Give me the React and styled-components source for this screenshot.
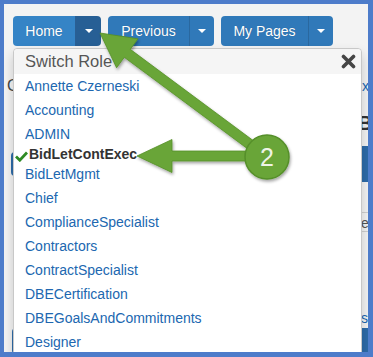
import React from "react";
import styled, { createGlobalStyle } from "styled-components";

const Global = createGlobalStyle`
  html, body { margin: 0; padding: 0; background: #fff; }
  body { font-family: "Liberation Sans", Arial, sans-serif; }
`;

const Frame = styled.div`
  position: relative;
  width: 373px;
  height: 357px;
  box-sizing: border-box;
  border: 4px solid #4d7cca;
  border-right-width: 5px;
  border-bottom-width: 5px;
  background: #f3f3f3;
  overflow: hidden;
  font-family: "Liberation Sans", Arial, sans-serif;
`;

const Toolbar = styled.div`
  display: flex;
  gap: 7px;
  padding: 12px 0 0 9px;
  height: 42px;
  box-sizing: border-box;
`;

const BtnGroup = styled.div`
  display: flex;
  height: 30px;
`;

const MainBtn = styled.button`
  width: ${(p) => p.$w}px;
  height: 30px;
  padding: 0;
  border: none;
  border-radius: 4px 0 0 4px;
  background: ${(p) => (p.$active ? "#3584c6" : "#3079b9")};
  color: #fff;
  font-family: "Liberation Sans", Arial, sans-serif;
  font-size: 14px;
  text-align: center;
  text-shadow: 0 0 1px rgba(0, 0, 0, 0.25);
`;

const CaretBtn = styled.button`
  width: ${(p) => p.$w}px;
  height: 30px;
  padding: 0;
  border: none;
  border-left: 1px solid ${(p) => (p.$active ? "#2a5f94" : "#2a689f")};
  border-radius: 0 4px 4px 0;
  background: ${(p) => (p.$active ? "#275f95" : "#3079b9")};
  display: flex;
  align-items: center;
  justify-content: center;
`;

const Caret = styled.span`
  width: 0;
  height: 0;
  border-left: 4px solid transparent;
  border-right: 4px solid transparent;
  border-top: 4px solid #fff;
`;

const Content = styled.div`
  display: flex;
  flex-direction: column;
`;

const BgRow = styled.div`
  display: grid;
  grid-template-columns: 357px 40px;
  height: ${(p) => p.$h}px;
  margin-top: ${(p) => p.$mt}px;
`;

const BgCell = styled.div`
  display: flex;
  align-items: ${(p) => p.$align || "center"};
  white-space: nowrap;
  font-size: ${(p) => p.$size || 14}px;
  font-weight: ${(p) => (p.$bold ? 700 : 400)};
  color: ${(p) => p.$color || "#444"};
  padding-left: ${(p) => p.$pl || 0}px;
  margin-left: ${(p) => p.$ml || 0}px;
  box-sizing: border-box;
  border-top: ${(p) => (p.$lines ? "1px solid #cfcfcf" : "none")};
  border-bottom: ${(p) => (p.$lines ? "1px solid #cfcfcf" : "none")};
`;

const BlueBar = styled.div`
  background: #2d6ba8;
  width: 100%;
  height: ${(p) => (p.$h ? `${p.$h}px` : "100%")};
  margin-left: ${(p) => p.$ml || 0}px;
  border-radius: ${(p) => (p.$round ? "4px" : "0")};
`;

const Dropdown = styled.div`
  position: absolute;
  left: 9px;
  top: 44px;
  width: 349px;
  bottom: -12px;
  box-sizing: border-box;
  background: #fff;
  border: 1px solid #c8c8c8;
  border-radius: 4px;
  box-shadow: 0 6px 12px rgba(0, 0, 0, 0.18);
  display: flex;
  flex-direction: column;
`;

const Header = styled.div`
  height: 25px;
  flex: none;
  display: flex;
  align-items: center;
  justify-content: space-between;
  padding: 0 5px 0 11px;
  background: #f5f5f5;
  border-radius: 4px 4px 0 0;
  font-size: 16.5px;
  color: #555;
`;

const Item = styled.div`
  height: ${(p) => (p.$selected ? 16 : 24)}px;
  flex: none;
  display: flex;
  align-items: center;
  gap: 1px;
  padding-left: ${(p) => (p.$selected ? 1 : 11)}px;
  font-size: 14px;
  font-weight: ${(p) => (p.$selected ? 700 : 400)};
  color: ${(p) => (p.$selected ? "#333" : "#2067b0")};
  white-space: nowrap;
`;

const Overlay = styled.svg`
  position: absolute;
  left: -4px;
  top: -4px;
  pointer-events: none;
`;

const CloseIcon = () => (
  <svg width="15" height="15" viewBox="0 0 15 15">
    <path d="M2.5 2.5 L12.5 12.5 M12.5 2.5 L2.5 12.5" stroke="#454545" strokeWidth="3.6" strokeLinecap="round" />
  </svg>
);

const CheckIcon = () => (
  <svg width="13" height="11" viewBox="0 0 13 11" style={{ marginTop: 4 }}>
    <path d="M1 5.5 L4.8 9.2 L12 1.5" fill="none" stroke="#2f8a24" strokeWidth="2.8" strokeLinejoin="miter" />
  </svg>
);

const buttons = [
  { label: "Home", w: 62, cw: 26, active: true },
  { label: "Previous", w: 81, cw: 25 },
  { label: "My Pages", w: 87, cw: 25 },
];

const roles = [
  "Annette Czerneski",
  "Accounting",
  "ADMIN",
  "BidLetContExec",
  "BidLetMgmt",
  "Chief",
  "ComplianceSpecialist",
  "Contractors",
  "ContractSpecialist",
  "DBECertification",
  "DBEGoalsAndCommitments",
  "Designer",
];

export default function App() {
  return (
    <>
      <Global />
      <Frame>
        <Toolbar>
          {buttons.map((b) => (
            <BtnGroup key={b.label}>
              <MainBtn $w={b.w} $active={b.active}>{b.label}</MainBtn>
              <CaretBtn $w={b.cw} $active={b.active}>
                <Caret />
              </CaretBtn>
            </BtnGroup>
          ))}
        </Toolbar>

        <Content>
          <BgRow $mt={31} $h={18}>
            <BgCell $size={16} $pl={3} $color="#444">C</BgCell>
            <BgCell $color="#2067b0" $pl={1}>xt</BgCell>
          </BgRow>
          <BgRow $mt={17} $h={22}>
            <BgCell />
            <BgCell $size={20} $bold $color="#333" $ml={-3}>Bi</BgCell>
          </BgRow>
          <BgRow $mt={12} $h={36}>
            <BgCell><BlueBar $h={24} $ml={7} $round /></BgCell>
            <BgCell><BlueBar /></BgCell>
          </BgRow>
          <BgRow $mt={30} $h={20}>
            <BgCell />
            <BgCell $lines $align="flex-end" $color="#555">e</BgCell>
          </BgRow>
          <BgRow $mt={78} $h={14}>
            <BgCell />
            <BgCell $color="#2067b0">st</BgCell>
          </BgRow>
          <BgRow $mt={4} $h={26}>
            <BgCell><BlueBar $ml={8} $round /></BgCell>
            <BgCell><BlueBar /></BgCell>
          </BgRow>
        </Content>

        <Dropdown>
          <Header>
            <span>Switch Role</span>
            <CloseIcon />
          </Header>
          {roles.map((r) => (
            <Item key={r} $selected={r === "BidLetContExec"}>
              {r === "BidLetContExec" && <CheckIcon />}
              {r}
            </Item>
          ))}
        </Dropdown>

        <Overlay width="373" height="357" viewBox="0 0 373 357">
          <defs>
            <filter id="sh" x="-20%" y="-20%" width="140%" height="140%">
              <feDropShadow dx="1" dy="2" stdDeviation="1.6" floodColor="#000" floodOpacity="0.35" />
            </filter>
          </defs>
          <g filter="url(#sh)">
            <polygon
              points="100,33 138,38.8 130.3,49.3 270,153 264,161 124.3,57.3 116.6,67.8"
              fill="#69a537"
              stroke="#548f27"
              strokeWidth="0.8"
            />
            <polygon
              points="137,156 172,139.5 172,151 267,151 267,161 172,161 172,172.5"
              fill="#69a537"
              stroke="#548f27"
              strokeWidth="0.8"
            />
            <circle cx="267" cy="157" r="22" fill="#69a537" stroke="#558f2a" strokeWidth="1.5" />
          </g>
          <text
            x="267"
            y="166"
            textAnchor="middle"
            fontFamily="Liberation Sans, Arial, sans-serif"
            fontSize="25"
            fill="#eef4e6"
          >
            2
          </text>
        </Overlay>
      </Frame>
    </>
  );
}
